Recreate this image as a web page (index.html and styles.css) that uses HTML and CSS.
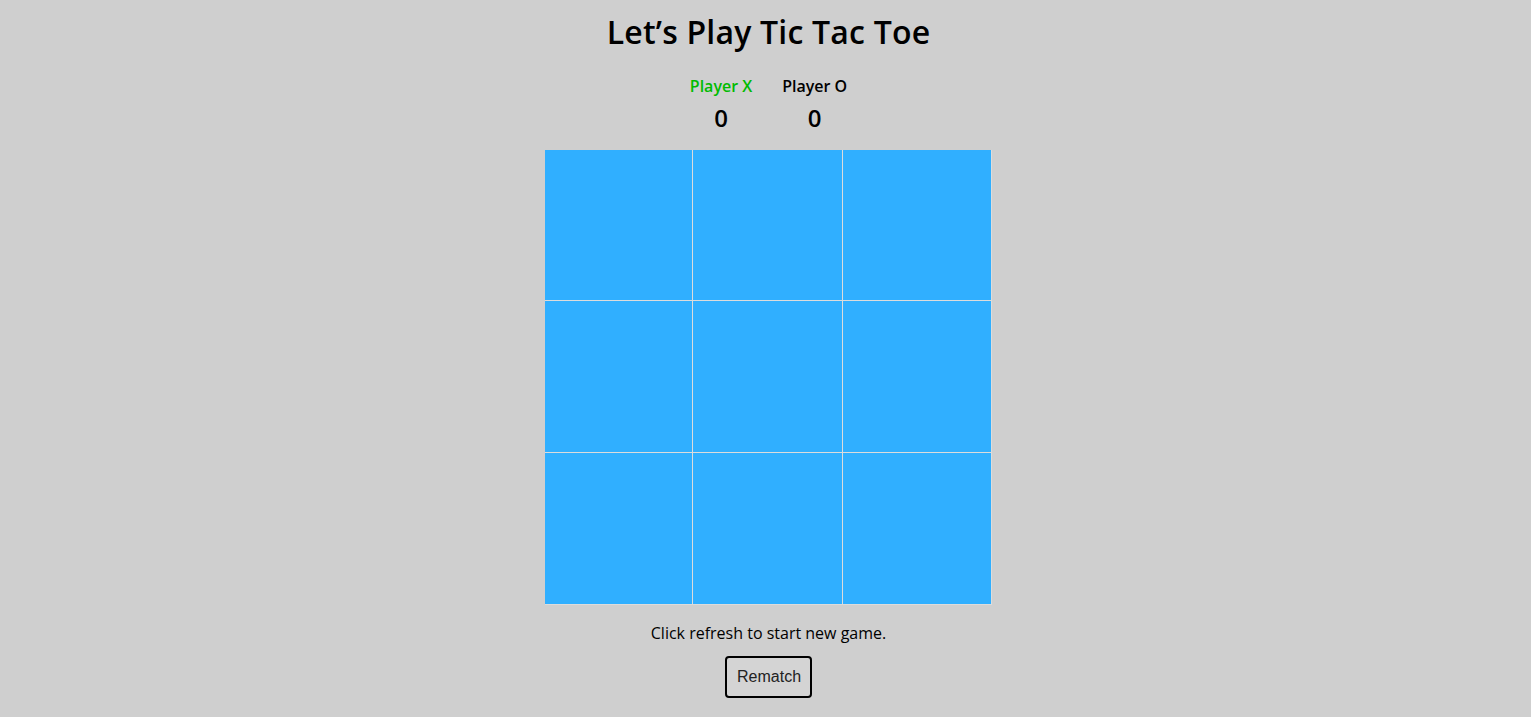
FILE: index.html
```html
<!DOCTYPE html>
<html lang="en">
<head>
<meta charset="utf-8">
<title>Tic Tac Toe</title>
<link rel="stylesheet" href="styles.css">
</head>
<body>
<main class="game">
  <h1 class="title">Let’s Play Tic Tac Toe</h1>
  <div class="scores">
    <div class="player player-active">
      <div class="player-name">Player X</div>
      <div class="player-score">0</div>
    </div>
    <div class="player">
      <div class="player-name">Player O</div>
      <div class="player-score">0</div>
    </div>
  </div>
  <div class="board">
    <div class="cell"></div><div class="cell"></div><div class="cell"></div>
    <div class="cell"></div><div class="cell"></div><div class="cell"></div>
    <div class="cell"></div><div class="cell"></div><div class="cell"></div>
  </div>
  <p class="hint">Click refresh to start new game.</p>
  <button class="rematch" type="button">Rematch</button>
</main>
</body>
</html>
```

FILE: styles.css
```css
html, body {
  margin: 0;
  padding: 0;
  background: #cfcfcf;
}
body {
  font-family: "Open Sans", "DejaVu Sans", sans-serif;
  color: #000;
}
.game {
  display: flex;
  flex-direction: column;
  align-items: center;
  padding-top: 12px;
  padding-left: 6px;
}
.title {
  margin: 0;
  font-size: 32px;
  font-weight: 600;
  line-height: 40px;
  letter-spacing: 0.2px;
}
.scores {
  display: flex;
  gap: 30px;
  margin-top: 24px;
}
.player {
  display: flex;
  flex-direction: column;
  align-items: center;
}
.player-name {
  font-size: 16px;
  font-weight: 600;
  line-height: 20px;
}
.player-active .player-name {
  color: #00bb00;
}
.player-score {
  font-size: 24px;
  font-weight: 600;
  line-height: 30px;
  margin-top: 7px;
}
.board {
  display: grid;
  grid-template-columns: 147px 149px 148px;
  grid-template-rows: 150px 151px 151px;
  gap: 1px;
  margin-top: 17px;
  background: #dcdcdc;
  border-right: 1px solid #dcdcdc;
  border-bottom: 1px solid #dcdcdc;
}
.cell {
  background: #30afff;
}
.hint {
  margin: 17px 0 0;
  font-size: 16px;
  line-height: 22px;
}
.rematch {
  margin-top: 12px;
  font-family: "Liberation Sans", Arial, sans-serif;
  font-size: 16px;
  color: #222;
  background: #d4d4d4;
  border: 2px solid #000;
  border-radius: 4px;
  padding: 0 10px;
  height: 42px;
  width: 87px;
}
```
